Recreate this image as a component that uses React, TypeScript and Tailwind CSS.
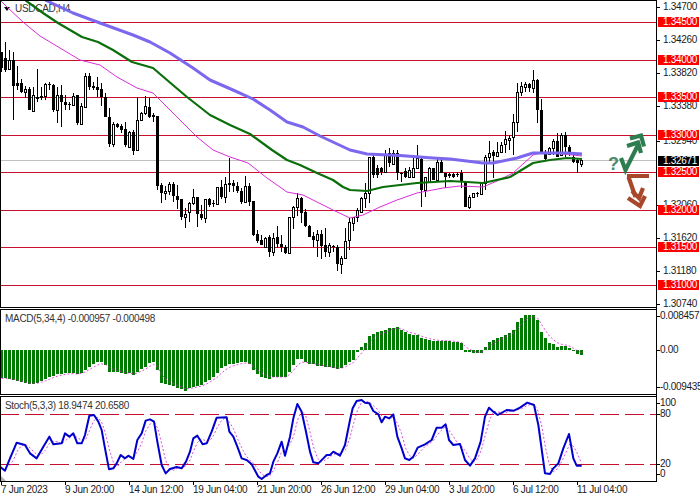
const c1: number[][] = [
[155,215,155,205,0],[125,215,175,210,0],[150,210,180,208,1],[155,360,180,258,0],[198,270,250,258,0],[238,280,250,275,0],[258,295,268,275,1],[262,330,268,330,0],[260,332,285,332,1],[207,305,290,298,0],
[262,300,288,292,1],[250,300,252,288,1],[245,270,252,256,0],[252,335,255,330,0],[262,370,285,330,1],[255,380,285,305,0],[285,330,305,315,0],[305,330,312,316,0],[280,318,288,315,1],[285,375,285,370,0],
[310,375,318,372,1],[220,322,228,320,1],[220,270,228,262,0],[245,270,258,264,0],[232,290,260,270,0],[250,318,268,290,0],[278,352,290,352,0],[325,440,352,432,0],[365,440,372,432,1],[368,385,372,380,0],
[372,400,378,390,0],[365,440,388,435,0],[392,445,395,440,1],[390,465,395,452,0],[290,452,360,450,1],[335,362,338,360,1],[288,345,318,338,1],[295,355,320,350,0],[340,365,345,350,0],[348,570,348,558,0],
];
const c2: number[][] = [
[100,160,105,130,0],[108,150,122,130,1],[95,135,102,122,1],[95,155,102,137,0],[105,178,137,150,0],[148,210,148,200,0],[175,235,192,200,1],[155,215,160,185,1],[118,165,142,160,1],[140,230,142,193,0],
[165,210,193,203,0],[148,218,148,203,1],[145,170,148,165,0],[150,172,158,163,0],[112,165,112,163,1],[90,148,112,142,0],[82,160,102,142,1],[25,125,100,104,0],[90,125,100,108,0],[95,130,108,122,0],
[115,162,122,155,0],[78,160,108,155,1],[100,168,108,155,0],[152,258,152,255,0],[240,278,252,272,0],[255,285,270,285,0],[260,290,263,290,1],[255,320,260,305,0],[250,318,263,305,1],[228,295,262,282,0],
[255,305,282,290,0],[285,312,292,308,0],[200,310,200,308,1],[168,238,172,202,1],[128,198,145,172,1],[140,220,143,188,0],[178,232,185,228,0],[226,262,228,260,0],[245,292,258,270,0],[240,320,252,270,1],
[240,328,252,288,0],[235,320,285,305,0],[280,322,285,305,1],[285,305,288,292,0],[285,362,290,342,0],[318,372,325,342,1],[235,325,272,325,1],[205,300,215,270,1],
[200,242,200,218,1],[175,215,180,200,1],[140,190,145,185,1],[100,175,130,145,1],[20,160,22,130,1],[10,85,20,75,0],[45,85,55,75,0],[50,75,55,65,0],[0,70,15,65,1],[-5,50,10,40,0],
[0,45,10,42,1],[0,90,10,70,0],[65,95,68,72,0],[55,85,62,80,0],[50,85,60,80,1],[25,85,55,80,1],[-15,55,25,55,1],[25,170,28,120,0],[80,140,82,120,1],[50,95,55,95,1],
[55,90,55,90,0],[20,95,35,90,1],[25,70,35,70,0],[70,115,70,80,0],[70,85,72,78,0],[70,85,72,80,0],[65,80,72,75,0],[60,115,70,95,0],[95,172,95,170,0],[135,178,140,170,1],
[128,145,130,140,1],[125,140,130,133,0],[100,135,100,132,1],[15,120,20,100,1],[-28,35,8,20,1],[0,85,5,18,0],[-25,20,5,18,1],[-25,8,-15,5,1],[-58,10,-32,-17,1],[-45,0,-35,-30,1],
[-108,15,-85,-38,1],[-202,-55,-175,-85,1],[-205,-162,-192,-175,1],[-205,-175,-198,-190,1],[-200,-175,-198,-185,0],[-240,-172,-210,-185,1],[-212,-80,-210,-120,0],[-152,5,-120,12,0],[0,30,5,28,0],[-10,15,-5,12,1],
[-32,15,-28,-5,1],[-50,20,-28,20,0],[-50,15,-45,15,1],[-53,20,-45,-10,0],[-15,18,-10,5,0],[10,40,20,35,0],[25,68,30,38,0],[25,50,30,42,1],
];
const candles = [
  ...c1.map(([a, b, c, d, u]) => ({ wt: a / 3, wb: b / 3, bt: c / 3, bb: d / 3, up: u === 1 })),
  ...c2.map(([a, b, c, d, u]) => ({ wt: 150 + a / 3, wb: 150 + b / 3, bt: 150 + c / 3, bb: 150 + d / 3, up: u === 1 })),
];

const path = (p: number[][]) => p.map(([x, y], i) => `${i ? "L" : "M"}${x} ${y}`).join("");

const blue = [[45,0],[73,13],[100,23],[133,35],[150,42],[170,53],[193,68],[210,80],[233,90],[253,99],[270,110],[287,122],[303,127],[320,136],[350,150],[367,154],[400,155.5],[433,158],[450,159],[483,163],[493,163],[517,158],[533,153],[550,153],[567,153],[582,154]];
const green = [[25,0],[43,13],[58,23],[82,37],[98,42],[113,50],[132,62],[153,68],[167,80],[187,97],[210,115],[230,125],[250,134],[272,150],[287,160],[300,165],[317,173],[333,180],[343,187],[350,190],[367,191],[383,187],[417,183],[450,181],[467,182],[483,183],[510,177],[533,163],[550,160],[567,158],[582,159]];
const magenta = [[0,0],[7,7],[23,22],[40,36],[60,48],[80,60],[100,65],[117,77],[137,88],[153,93],[167,107],[197,137],[213,150],[230,157],[248,163],[267,178],[287,192],[303,195],[333,210],[350,218],[363,215],[380,207],[397,200],[417,193],[443,188],[460,186],[483,187],[497,181],[513,173],[533,155],[545,152],[582,156]];

const levels = [22.5, 60.5, 97.5, 135.5, 172.5, 210.5, 247.5, 285.5];

const macdZ = [220,220,222,225,228,232,235,238,237,233,228,222,217,212,208,207,205,205,205,208,203,195,185,178,172,172,180,200,200,200,203,208,205,210,200,192,185,175,170,195,235,238,240,243,248,253,257,250,245,243,240,232,225,215,205,190,183,178,176,175,172,172,178,195,207,215,218,222,216,216,216,216,200,180,162,162,170,176,178,182,184,185,187,190,192,190,180,170,
165,142,127,113,92,87,82,78,75,70,68,67,75,82,88,90,90,100,103,105,107,108,108,107,108,110,112,115,141,142,145,145,143,125,110,105,100,95,90,85,75,52,40,30,30,30,45,80,100,113,118,125,123,122,128,138,147,150];
const macdY = macdZ.map((z) => 350 + (z - 135) / 3);
const macdSig: number[][] = [];
macdY.reduce((prev, y, i) => {
  const s = i === 0 ? y : prev * 0.55 + y * 0.45;
  macdSig.push([1.5 + 4 * i, s]);
  return s;
}, macdY[0]);

const st1 = [[0,485],[15,497],[30,460],[50,413],[75,420],[90,445],[110,460],[130,425],[148,395],[160,418],[185,415],[195,385],[208,395],[220,385],[232,415],[245,415],[255,390],[268,332],[282,330],[295,350],[305,375],[315,430],[327,493],[340,490],[350,475],[362,450],[375,460],[385,452],[400,462],[412,405],[425,385],[437,347],[450,343],[462,350],[472,410],[485,480],[497,505],[510,492],[530,486],[545,490],[558,470],[570,440],[580,400],[592,392],[608,418],[620,415],[635,380],[650,338],[680,337],[688,380],[700,395],[712,425],[725,460],[740,465],[755,478],[775,515],[785,522],[800,510],[810,505],[820,470],[832,445],[845,410],[855,452],[870,395],[880,340],[892,297],[905,320],[918,380],[930,440],[940,472],[955,475],[970,460],[980,450],[990,450],[1000,440],[1020,452],[1035,420],[1050,345]];
const st2 = [[8,310],[20,288],[35,285],[45,293],[58,295],[70,318],[85,328],[95,352],[105,335],[118,340],[130,328],[142,395],[155,430],[165,460],[178,465],[190,455],[203,428],[225,418],[245,405],[260,368],[275,368],[287,358],[297,405],[310,420],[330,417],[345,465],[360,482],[375,460],[392,410],[405,335],[417,308],[430,320],[443,330],[470,315],[492,317],[510,308],[532,293],[552,300],[565,360],[585,505],[600,507],[610,490],[625,475],[640,430],[657,387],[670,460],[680,482],[695,482]];
const stoch = [...st1.map(([x, y]) => [x / 3, 305 + y / 3]), ...st2.map(([x, y]) => [350 + x / 3, 305 + y / 3])];
const interp = (x: number) => {
  for (let i = 1; i < stoch.length; i++) {
    if (x <= stoch[i][0]) {
      const [a, b] = [stoch[i - 1], stoch[i]];
      return a[1] + ((b[1] - a[1]) * (x - a[0])) / (b[0] - a[0]);
    }
  }
  return stoch[stoch.length - 1][1];
};
const stochSig: number[][] = [];
for (let i = 2; i < 146; i++) {
  const x = 1.5 + 4 * i;
  stochSig.push([x, (interp(x) + interp(x - 4) + interp(x - 8)) / 3]);
}

function Tag({ y, text, black }: { y: number; text: string; black?: boolean }) {
  return (
    <span
      className={black
        ? "absolute left-[1px] w-[41px] h-[10px] bg-black text-white text-[10px] leading-[10px] pl-[5px]"
        : "absolute left-[1px] w-[41px] h-[10px] bg-[#ff0000] text-white text-[10px] leading-[10px] pl-[5px]"}
      style={{ top: y - 5 }}
    >
      {text}
    </span>
  );
}

function AxisLabel({ y, text, near }: { y: number; text: string; near?: boolean }) {
  return (
    <>
      <span className="absolute left-0 w-[3px] h-px bg-black" style={{ top: y }} />
      <span
        className={near
          ? "absolute left-[3px] text-[10px] leading-[10px] text-[#1a1a1a] whitespace-nowrap"
          : "absolute left-[6px] text-[10px] leading-[10px] text-[#1a1a1a] whitespace-nowrap"}
        style={{ top: y - 5 }}
      >
        {text}
      </span>
    </>
  );
}

const priceLabels: [number, string][] = [[7, "1.34700"], [40, "1.34260"], [73, "1.33820"], [106, "1.33380"], [141, "1.32940"], [205, "1.32060"], [238, "1.31620"], [271, "1.31180"], [304, "1.30740"]];
const otherLabels: [number, string][] = [[316, "0.008457"], [350, "0.00"], [387, "-0.009435"], [403, "100"], [414, "80"], [464, "20"], [474, "0"]];
const tags: [number, string][] = [[21.5, "1.34500"], [59.5, "1.34000"], [96.5, "1.33500"], [134.5, "1.33000"], [171.5, "1.32500"], [209.5, "1.32000"], [246.5, "1.31500"], [284.5, "1.31000"]];
const times = ["7 Jun 2023", "9 Jun 20:00", "14 Jun 12:00", "19 Jun 04:00", "21 Jun 20:00", "26 Jun 12:00", "29 Jun 04:00", "3 Jul 20:00", "6 Jul 12:00", "11 Jul 04:00"];

export default function App() {
  return (
    <div className="w-[700px] h-[500px] bg-white overflow-hidden flex flex-col [font-family:'Liberation_Sans',sans-serif] tracking-[-0.3px]">
      <div className="flex h-[482px]">
        <div className="w-[656px] flex flex-col gap-px">
          <div className="relative h-[308px] border-l border-t border-b border-black">
            <div className="absolute left-[3px] top-[2px] flex items-center gap-[2px] text-[10px] leading-[12px] text-[#333]">
              <span className="w-0 h-0 border-x-[3.5px] border-x-transparent border-t-[4px] border-t-black" />
              <span className="ml-[3px]">USDCAD,H4</span>
            </div>
            <svg className="relative block" width={655} height={306} viewBox="1 1 655 306">
              <line x1={0} x2={656} y1={160.5} y2={160.5} stroke="#c0c0c0" strokeWidth={1} shapeRendering="crispEdges" />
              {levels.map((y) => (
                <line key={y} x1={0} x2={656} y1={y} y2={y} stroke="#c8102e" strokeWidth={1} shapeRendering="crispEdges" />
              ))}
              <g shapeRendering="crispEdges">
                {candles.map((c, i) => {
                  const x = 1.5 + 4 * i;
                  const top = Math.round(c.bt);
                  const h = Math.max(1, Math.round(c.bb) - top);
                  return (
                    <g key={i}>
                      <line x1={x} x2={x} y1={Math.round(c.wt)} y2={Math.round(c.wb)} stroke="#000" />
                      {c.up ? (
                        <rect x={x - 1} y={top + 0.5} width={2} height={h} fill="#fff" stroke="#000" />
                      ) : (
                        <rect x={x - 1.5} y={top} width={3} height={h} fill="#000" />
                      )}
                    </g>
                  );
                })}
              </g>
              <g fill="none" strokeLinejoin="round">
                <path d={path(magenta)} stroke="#d92fd9" strokeWidth={1} />
                <path d={path(green)} stroke="#0a6e0a" strokeWidth={2.2} />
                <path d={path(blue)} stroke="#7b68ee" strokeWidth={3} />
              </g>
              <g fill="none" strokeWidth={4.2}>
                <path d="M621 158L625.5 170L639 143" stroke="#2e7d4f" />
                <path d="M630 138.5L641 135.5L644 146.5M627 146L638 142.5L641 153" stroke="#2e7d4f" />
                <path d="M627 176H649M628.5 177L635.5 197" stroke="#a8472a" />
                <path d="M628 198L640 206L645 196M632 191L639 198L643 188" stroke="#a8472a" />
              </g>
            </svg>
            <span className="absolute left-[607px] top-[154px] text-[18px] leading-[18px] font-bold text-[#4d8a6a]">?</span>
          </div>
          <div className="relative h-[86px] border border-r-0 border-black">
            <span className="absolute left-[4px] top-[3px] text-[10px] leading-[12px] text-[#333] whitespace-nowrap">MACD(5,34,4) -0.000957 -0.000498</span>
            <svg className="block" width={655} height={84} viewBox="1 310 655 84">
              <g shapeRendering="crispEdges">
                {macdY.map((y, i) => (
                  <rect key={i} x={4 * i} y={Math.min(y, 350)} width={3} height={Math.max(1, Math.abs(y - 350))} fill="#007a00" />
                ))}
              </g>
              <path d={path(macdSig)} fill="none" stroke="#d020d0" strokeWidth={0.8} strokeDasharray="2 2" />
            </svg>
          </div>
          <div className="relative h-[86px] border border-r-0 border-black">
            <span className="absolute left-[4px] top-[3px] text-[10px] leading-[12px] text-[#333] whitespace-nowrap">Stoch(5,3,3) 18.9474 20.6580</span>
            <svg className="block" width={655} height={84} viewBox="1 397 655 84">
              <g shapeRendering="crispEdges" stroke="#c8102e" strokeDasharray="19 6">
                <line x1={0} x2={656} y1={414.5} y2={414.5} />
                <line x1={0} x2={656} y1={464.5} y2={464.5} />
              </g>
              <path d={path(stochSig)} fill="none" stroke="#d020d0" strokeWidth={0.8} strokeDasharray="2 2" />
              <path d={path(stoch)} fill="none" stroke="#0000cd" strokeWidth={2} strokeLinejoin="round" />
              <polygon points="1,476 6,481 1,481" fill="#b0b0b0" />
            </svg>
          </div>
        </div>
        <div className="relative w-[44px] border-l border-black">
          {priceLabels.map(([y, t]) => (
            <AxisLabel key={t} y={y} text={t} />
          ))}
          {otherLabels.map(([y, t]) => (
            <AxisLabel key={t} y={y} text={t} near />
          ))}
          {tags.map(([y, t]) => (
            <Tag key={t} y={y} text={t} />
          ))}
          <Tag y={160.5} text="1.32671" black />
        </div>
      </div>
      <div className="flex pl-px h-[18px]">
        {times.map((t) => (
          <div key={t} className="w-[64px] shrink-0 flex flex-col">
            <span className="block w-px h-[3px] bg-black" />
            <span className="block text-[10px] leading-[10px] text-[#1a1a1a] whitespace-nowrap">{t}</span>
          </div>
        ))}
      </div>
    </div>
  );
}
